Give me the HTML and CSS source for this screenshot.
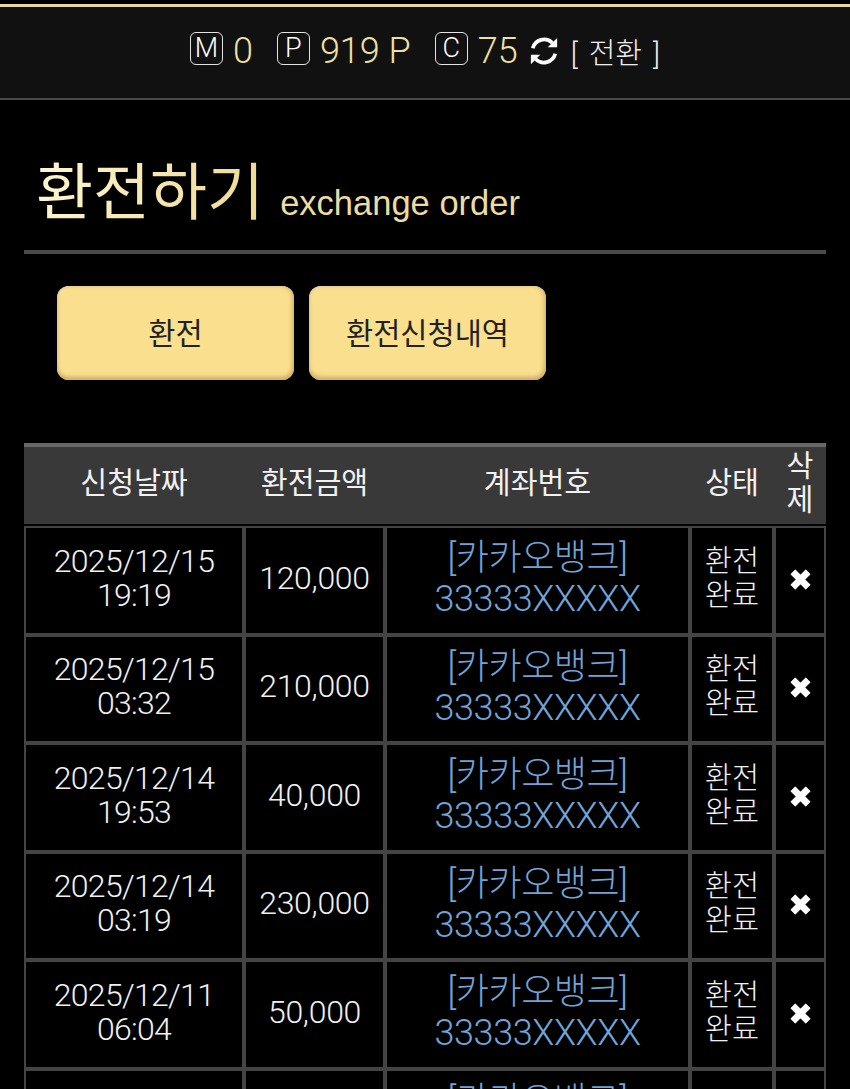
FILE: index.html
```html
<!DOCTYPE html>
<html lang="ko">
<head>
	<meta charset="UTF-8">
	<title>환전하기</title>
	<link rel="stylesheet" href="styles.css">
</head>
<body>
<svg class="defs" width="0" height="0">
	<symbol id="x-icon" viewBox="0 0 20 20">
		<path d="M5 1 L10 6 L15 1 L19 5 L14 10 L19 15 L15 19 L10 14 L5 19 L1 15 L6 10 L1 5 Z" fill="#fff" stroke="#fff" stroke-linejoin="round"/>
	</symbol>
</svg>
<div class="page">
	<div class="topbar">
		<span class="badge">M</span><span class="amount amount-m">0</span>
		<span class="badge">P</span><span class="amount amount-p">919 P</span>
		<span class="badge">C</span><span class="amount amount-c">75</span>
		<svg class="sync" viewBox="0 0 32 32" width="30" height="30">
			<path d="M4 13 A12.5 12.5 0 0 1 25 7.5" fill="none" stroke="#fff" stroke-width="4"/>
			<polygon points="20,12 30,12 30,2" fill="#fff"/>
			<path d="M28 19 A12.5 12.5 0 0 1 7 24.5" fill="none" stroke="#fff" stroke-width="4"/>
			<polygon points="12,20 2,20 2,30" fill="#fff"/>
		</svg>
		<span class="switch">[ 전환 ]</span>
	</div>

	<div class="title">
		<h1>환전하기</h1>
		<span class="title-en">exchange order</span>
	</div>

	<div class="btns">
		<a class="btn">환전</a>
		<a class="btn">환전신청내역</a>
	</div>

	<table class="list">
		<colgroup>
			<col class="c-date"><col class="c-money"><col class="c-account"><col class="c-state"><col class="c-del">
		</colgroup>
		<thead>
			<tr>
				<th>신청날짜</th>
				<th>환전금액</th>
				<th>계좌번호</th>
				<th>상태</th>
				<th>삭제</th>
			</tr>
		</thead>
		<tbody>
			<tr>
				<td class="date">2025/12/15<br>19:19</td>
				<td class="money">120,000</td>
				<td class="account">[카카오뱅크]<br>33333XXXXX</td>
				<td class="state">환전<br>완료</td>
				<td class="remove"><svg class="del"><use href="#x-icon"/></svg></td>
			</tr>
			<tr>
				<td class="date">2025/12/15<br>03:32</td>
				<td class="money">210,000</td>
				<td class="account">[카카오뱅크]<br>33333XXXXX</td>
				<td class="state">환전<br>완료</td>
				<td class="remove"><svg class="del"><use href="#x-icon"/></svg></td>
			</tr>
			<tr>
				<td class="date">2025/12/14<br>19:53</td>
				<td class="money">40,000</td>
				<td class="account">[카카오뱅크]<br>33333XXXXX</td>
				<td class="state">환전<br>완료</td>
				<td class="remove"><svg class="del"><use href="#x-icon"/></svg></td>
			</tr>
			<tr>
				<td class="date">2025/12/14<br>03:19</td>
				<td class="money">230,000</td>
				<td class="account">[카카오뱅크]<br>33333XXXXX</td>
				<td class="state">환전<br>완료</td>
				<td class="remove"><svg class="del"><use href="#x-icon"/></svg></td>
			</tr>
			<tr>
				<td class="date">2025/12/11<br>06:04</td>
				<td class="money">50,000</td>
				<td class="account">[카카오뱅크]<br>33333XXXXX</td>
				<td class="state">환전<br>완료</td>
				<td class="remove"><svg class="del"><use href="#x-icon"/></svg></td>
			</tr>
			<tr>
				<td class="date">&nbsp;</td>
				<td class="money">&nbsp;</td>
				<td class="account">[카카오뱅크]<br>33333XXXXX</td>
				<td class="state">&nbsp;</td>
				<td class="remove">&nbsp;</td>
			</tr>
		</tbody>
	</table>
</div>
</body>
</html>
```

FILE: styles.css
```css
*{
	box-sizing:border-box;
}

html,body{
	margin:0;
	padding:0;
	background:#000;
}

body{
	font-family:"Roboto","Noto Sans CJK KR",sans-serif;
	font-weight:300;
	color:#f0f0f0;
}

.defs{
	position:absolute;
}

.page{
	height:1089px;
	padding-top:4px;
	overflow:hidden;
	background:#000;
}

/* top bar */
.topbar{
	display:flex;
	align-items:center;
	justify-content:center;
	height:96px;
	padding:0 0 9px;
	background:#111;
	border-top:3px solid #e9d9a0;
	border-bottom:2px solid #4a4a4a;
	font-size:36px;
}

.badge{
	display:flex;
	align-items:center;
	justify-content:center;
	width:33px;
	height:33px;
	border:1.5px solid #e4e4e4;
	border-radius:6px;
	font-size:27px;
	font-weight:300;
	color:#fff;
}

.amount{
	position:relative;
	top:3px;
	margin-left:10px;
	color:#f0e0a0;
}

.amount-m,
.amount-p{
	margin-right:24px;
}

.sync{
	margin:5px 12px 0 11px;
}

.switch{
	font-size:29px;
	word-spacing:4px;
	color:#eee;
	position:relative;
	top:3px;
}

/* title */
.title{
	display:flex;
	align-items:baseline;
	height:154px;
	margin:0 24px;
	padding:49px 12px 0;
	border-bottom:4px solid #4a4a4a;
}

.title h1{
	margin:0;
	font-size:62px;
	font-weight:400;
	line-height:90px;
	background:linear-gradient(100deg,#fff6d2,#ecd992);
	-webkit-background-clip:text;
	background-clip:text;
	color:transparent;
}

.title-en{
	margin-left:16px;
	font-family:"Liberation Sans",sans-serif;
	font-size:34.5px;
	font-weight:400;
	color:#ecdca0;
}

/* buttons */
.btns{
	display:flex;
	gap:15px;
	padding:32px 0 0 57px;
}

.btn{
	display:flex;
	align-items:center;
	justify-content:center;
	width:237px;
	height:94px;
	padding-bottom:4px;
	border-radius:12px;
	background:#fadf8e;
	box-shadow:inset 0 -3px 4px #cdae68,inset -2px 0 4px #dcbd72,inset 2px 2px 3px #f5e2a4;
	font-size:29.5px;
	font-weight:400;
	color:#222;
}

/* table */
.list{
	table-layout:fixed;
	width:802px;
	margin:63px 0 0 24px;
	border-collapse:separate;
	border-spacing:0;
	background:#444;
	border-top:4px solid #666;
}

.c-date{width:220px;}
.c-money{width:141px;}
.c-account{width:305px;}
.c-state{width:84px;}
.c-del{width:52px;}

.list th{
	height:79px;
	padding:0 0 5px;
	background:#3a393a;
	border-bottom:2px solid #000;
	font-size:29.2px;
	font-weight:400;
	line-height:34px;
	color:#f2f2f2;
}

.list td{
	height:108.5px;
	padding:0 0 5px;
	background:#000;
	border:2px solid #444;
	text-align:center;
	font-size:32px;
	line-height:34px;
}

.list .date{
	letter-spacing:-.7px;
}

.list .money{
	letter-spacing:-.3px;
}

.list .account{
	padding-bottom:2px;
	font-size:36px;
	line-height:41px;
	letter-spacing:-.4px;
	color:#70a4d9;
}

.list .state{
	font-size:29.5px;
}

.list .remove{
	padding:0 0 2px;
}

.del{
	display:block;
	width:21px;
	height:21px;
	margin:0 auto;
}
```
